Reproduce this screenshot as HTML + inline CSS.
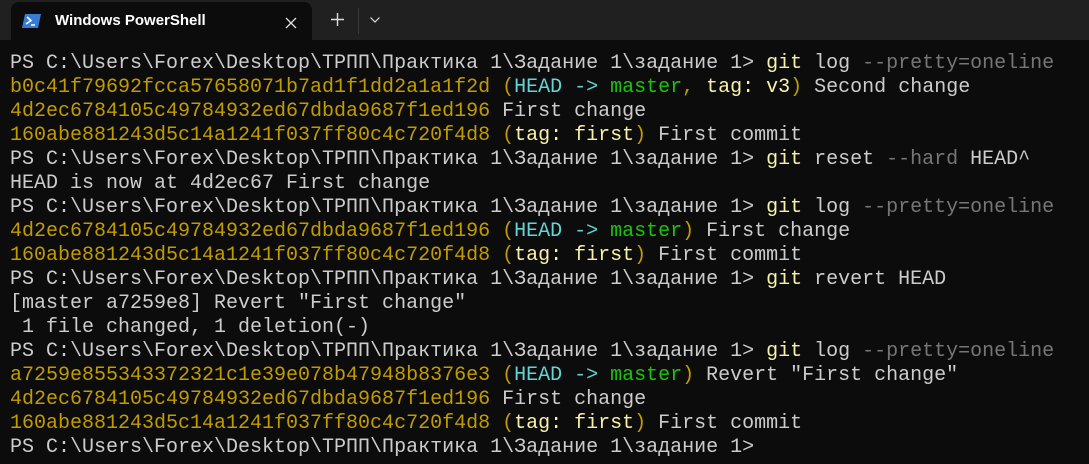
<!DOCTYPE html>
<html><head><meta charset="utf-8"><style>
html,body{margin:0;padding:0;width:1089px;height:464px;overflow:hidden;background:#0c0c0c;}
.bar{position:absolute;left:0;top:0;width:1089px;height:40px;background:#202020;}
.tab{position:absolute;left:11px;top:2px;width:301px;height:38px;background:#0c0c0c;border-radius:8px 8px 0 0;}
.title{position:absolute;left:55px;top:10px;font:600 15px "Liberation Sans",sans-serif;color:#fff;}
.term{position:absolute;left:10px;top:52px;font-family:"Liberation Mono","DejaVu Sans Mono",monospace;font-size:20px;line-height:24px;color:#cccccc;white-space:pre;}
.y{color:#c19c00}.c{color:#f9f1a5}.g{color:#767676}.h{color:#61d6d6}.m{color:#16c60c}.t{color:#f9f1a5}
</style></head><body>
<div class="bar">
<div class="tab">
<svg style="position:absolute;left:11px;top:11px" width="20" height="16" viewBox="0 0 20 16"><path d="M3 1H19L16 15H0Z" fill="#3a7bd5"/><path d="M5 4L9 7.5L4 11" stroke="#fff" stroke-width="1.6" fill="none"/><path d="M9 12H13" stroke="#fff" stroke-width="1.6"/></svg>
<div class="title" style="left:44px">Windows PowerShell</div>
<svg style="position:absolute;left:274px;top:15px" width="12" height="12"><path d="M1 1L11 11M11 1L1 11" stroke="#ddd" stroke-width="1.3"/></svg>
</div>
<svg style="position:absolute;left:331px;top:13px" width="13" height="13"><path d="M6.5 0V13M0 6.5H13" stroke="#ddd" stroke-width="1.4"/></svg>
<div style="position:absolute;left:358px;top:8px;width:1px;height:26px;background:#3a3a3a"></div>
<svg style="position:absolute;left:370px;top:17px" width="10" height="6"><path d="M0.5 0.5L5 5L9.5 0.5" stroke="#ddd" stroke-width="1.2" fill="none"/></svg>
</div>
<div class="term">PS C:\Users\Forex\Desktop\ТРПП\Практика 1\Задание 1\задание 1> <span class="c">git</span> log <span class="g">--pretty=oneline</span>
<span class="y">b0c41f79692fcca57658071b7ad1f1dd2a1a1f2d (</span><span class="h">HEAD -&gt; </span><span class="m">master</span><span class="y">, </span><span class="t">tag: v3</span><span class="y">)</span> Second change
<span class="y">4d2ec6784105c49784932ed67dbda9687f1ed196</span> First change
<span class="y">160abe881243d5c14a1241f037ff80c4c720f4d8 (</span><span class="t">tag: first</span><span class="y">)</span> First commit
PS C:\Users\Forex\Desktop\ТРПП\Практика 1\Задание 1\задание 1> <span class="c">git</span> reset <span class="g">--hard</span> HEAD^
HEAD is now at 4d2ec67 First change
PS C:\Users\Forex\Desktop\ТРПП\Практика 1\Задание 1\задание 1> <span class="c">git</span> log <span class="g">--pretty=oneline</span>
<span class="y">4d2ec6784105c49784932ed67dbda9687f1ed196 (</span><span class="h">HEAD -&gt; </span><span class="m">master</span><span class="y">)</span> First change
<span class="y">160abe881243d5c14a1241f037ff80c4c720f4d8 (</span><span class="t">tag: first</span><span class="y">)</span> First commit
PS C:\Users\Forex\Desktop\ТРПП\Практика 1\Задание 1\задание 1> <span class="c">git</span> revert HEAD
[master a7259e8] Revert "First change"
 1 file changed, 1 deletion(-)
PS C:\Users\Forex\Desktop\ТРПП\Практика 1\Задание 1\задание 1> <span class="c">git</span> log <span class="g">--pretty=oneline</span>
<span class="y">a7259e855343372321c1e39e078b47948b8376e3 (</span><span class="h">HEAD -&gt; </span><span class="m">master</span><span class="y">)</span> Revert "First change"
<span class="y">4d2ec6784105c49784932ed67dbda9687f1ed196</span> First change
<span class="y">160abe881243d5c14a1241f037ff80c4c720f4d8 (</span><span class="t">tag: first</span><span class="y">)</span> First commit
PS C:\Users\Forex\Desktop\ТРПП\Практика 1\Задание 1\задание 1></div>
</body></html>
